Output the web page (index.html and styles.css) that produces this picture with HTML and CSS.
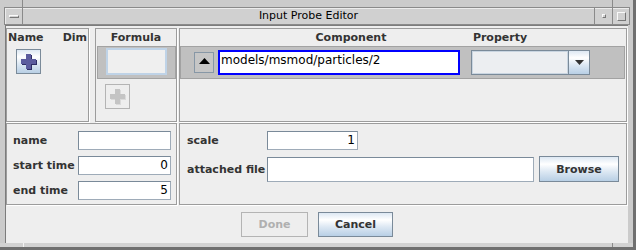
FILE: index.html
```html
<html>
	<head>
		<title>Input Probe Editor</title>
		<meta charset="UTF-8">
		<link rel="stylesheet" href="styles.css">
	</head>
	<body>
		<div class="window">
			<div class="frame-top">
				<div class="corner-l"></div>
				<div class="edge"></div>
				<div class="corner-r"></div>
			</div>
			<div class="titlebar">
				<div class="tb-menu"><span class="dash"></span></div>
				<div class="tb-title">Input Probe Editor</div>
				<div class="tb-min"><span class="dot"></span></div>
				<div class="tb-max"><span class="square"></span></div>
			</div>
			<div class="middle">
				<div class="client">
					<div class="top-row">
						<div class="pane names">
							<div class="pane-head names-head"><span>Name</span><span>Dim</span></div>
							<button class="icon-btn add-name">
								<svg width="16" height="16" viewBox="0 0 16 16">
									<path d="M6 1h5v5h5v5h-5v5h-5v-5h-5v-5h5z" fill="#2e2e66"/>
									<path d="M5 0h5v5h5v5h-5v5h-5v-5h-5v-5h5z" fill="#5c5c9e"/>
								</svg>
							</button>
						</div>
						<div class="pane formula">
							<div class="pane-head">Formula</div>
							<div class="sel-row formula-row"><div class="formula-field"></div></div>
							<button class="icon-btn add-formula" disabled>
								<svg width="16" height="16" viewBox="0 0 16 16">
									<path d="M6 1h5v5h5v5h-5v5h-5v-5h-5v-5h5z" fill="#dadada"/>
									<path d="M5 0h5v5h5v5h-5v5h-5v-5h-5v-5h5z" fill="#c4c4c4"/>
								</svg>
							</button>
						</div>
						<div class="pane component">
							<div class="pane-head comp-head"><span class="h-comp">Component</span><span class="h-prop">Property</span></div>
							<div class="sel-row comp-row">
								<button class="up-btn">
									<svg width="11" height="6" viewBox="0 0 11 6"><path d="M0 6L5.5 0L11 6z" fill="#000"/></svg>
								</button>
								<div class="path-field">models/msmod/particles/2</div>
								<div class="combo">
									<div class="combo-val"></div>
									<div class="combo-arrow">
										<svg width="9" height="5" viewBox="0 0 9 5"><path d="M0 0h9L4.5 5z" fill="#333"/></svg>
									</div>
								</div>
							</div>
						</div>
					</div>
					<div class="bottom-row">
						<div class="pane form times">
							<div class="form-line"><label>name</label><div class="field"></div></div>
							<div class="form-line"><label>start time</label><div class="field">0</div></div>
							<div class="form-line"><label>end time</label><div class="field">5</div></div>
						</div>
						<div class="pane form params">
							<div class="form-line"><label>scale</label><div class="field scale">1</div></div>
							<div class="form-line tall"><label>attached file</label><div class="field file"></div><button class="btn browse">Browse</button></div>
						</div>
					</div>
					<div class="actions">
						<button class="btn done" disabled>Done</button>
						<button class="btn cancel">Cancel</button>
					</div>
				</div>
			</div>
			<div class="frame-bottom">
				<div class="corner-l"></div>
				<div class="edge"></div>
				<div class="corner-r"></div>
			</div>
		</div>
	</body>
</html>
```

FILE: styles.css
```css
* {
	box-sizing: border-box;
	margin: 0px;
	padding: 0px;
}

body {
	font-family: "DejaVu Sans", sans-serif;
	background: #cbcbcb;
}

button { font-family: "DejaVu Sans", sans-serif; }

.window {
	width: 636px;
	height: 250px;
	background: #cbcbcb;
	border-right: 3px solid #6f6f6f;
	border-bottom: 3px solid #6f6f6f;
	display: flex;
	flex-direction: column;
}

/* window manager frame */

.frame-top, .frame-bottom { display: flex; }

.frame-top { height: 7px; }

.frame-bottom { height: 4px; background: #d2d2d2; }

.frame-top .corner-l { width: 23px; border-right: 1px solid #8a8a8a; }
.frame-bottom .corner-l { width: 24px; border-right: 1px solid #f4f4f4; }

.edge { flex: 1; }

.frame-top .corner-r { width: 21px; border-left: 1px solid #8a8a8a; }
.frame-bottom .corner-r { width: 21px; border-left: 1px solid #8a8a8a; }

.titlebar {
	display: flex;
	height: 18px;
	margin: 0px 3px 0px 4px;
	border: 1px solid #8a8a8a;
	background: #d0d0d0;
	box-shadow: inset 1px 1px 0 #ececec;
}

.tb-menu, .tb-min, .tb-max {
	display: flex;
	align-items: center;
	justify-content: center;
}

.tb-menu { width: 18px; border-right: 1px solid #8a8a8a; }

.tb-title {
	flex: 1;
	text-align: center;
	font-size: 11px;
	line-height: 16px;
	color: #000;
}

.tb-min { width: 18px; border-left: 1px solid #8a8a8a; }

.tb-max { width: 17px; border-left: 1px solid #8a8a8a; }

.dash {
	width: 10px;
	height: 3px;
	border-top: 1px solid #fafafa;
	border-left: 1px solid #fafafa;
	border-bottom: 1px solid #777;
	border-right: 1px solid #777;
}

.dot {
	width: 4px;
	height: 4px;
	border-top: 1px solid #fafafa;
	border-left: 1px solid #fafafa;
	border-bottom: 1px solid #777;
	border-right: 1px solid #777;
}

.square {
	width: 9px;
	height: 9px;
	border-top: 1px solid #fafafa;
	border-left: 1px solid #fafafa;
	border-bottom: 1px solid #777;
	border-right: 1px solid #777;
}

.middle {
	flex: 1;
	display: flex;
	padding: 0px 5px;
}

.client {
	flex: 1;
	display: flex;
	flex-direction: column;
	padding-top: 2px;
	background: #eeeeee;
	border-left: 1px solid #7c7c7c;
	border-top: 1px solid #7c7c7c;
}

/* panes */

.pane {
	border: 1px solid #9c9c9c;
	box-shadow: 1px 1px 0 #fff;
}

.pane-head {
	padding-top: 1px;
	line-height: 16px;
	font-size: 11px;
	font-weight: bold;
	color: #333;
	text-align: center;
}

.top-row {
	display: flex;
	height: 95px;
}

.top-row .pane { height: 94px; }

.names { width: 83px; margin-right: 6px; }

.names-head {
	display: flex;
	justify-content: space-between;
	padding-left: 1px;
	padding-right: 1px;
}

.formula { width: 82px; margin-right: 2px; }

.component { flex: 1; margin-right: 1px; }

.sel-row {
	height: 33px;
	background: #c0c0c0;
	border: 1px solid #a2a2a2;
}

.formula-row { margin-left: 1px; }

.formula-field {
	width: 61px;
	height: 27px;
	margin: 1px 0px 0px 8px;
	background: #efefef;
	border: 2px solid #bfd3e7;
}

.icon-btn {
	display: flex;
	align-items: center;
	justify-content: center;
	width: 25px;
	height: 25px;
	border: 1px solid #7a8a99;
	background: linear-gradient(#dde8f3 0%, #ffffff 30%, #dde8f3 60%, #b8cfe5 100%);
}

.icon-btn[disabled] {
	border-color: #b4b4b4;
	background: #eeeeee;
}

.add-name { margin: 3px 0px 0px 9px; }

.add-formula { margin: 5px 0px 0px 9px; }

.comp-head {
	display: flex;
	padding-left: 121px;
}

.h-comp { width: 100px; }

.h-prop { width: 80px; margin-left: 59px; }

.comp-row {
	display: flex;
	align-items: center;
	margin-right: 1px;
	padding-left: 13px;
}

.up-btn {
	display: flex;
	align-items: center;
	justify-content: center;
	width: 20px;
	height: 21px;
	padding-bottom: 3px;
	border: 1px solid #8797a6;
	background: #c6c6c6;
}

.path-field {
	width: 242px;
	height: 25px;
	margin-left: 4px;
	padding: 0px 0px 4px 1px;
	background: #fff;
	border: 2px solid #0000ff;
	font-size: 12px;
	line-height: 17px;
	color: #000;
	white-space: nowrap;
	overflow: hidden;
}

.combo {
	display: flex;
	width: 119px;
	height: 25px;
	margin-left: 11px;
	border: 1px solid #7a8a99;
}

.combo-val {
	flex: 1;
	background: #eceef1;
	box-shadow: inset 0 0 0 1px #c9d5e1;
}

.combo-arrow {
	display: flex;
	align-items: center;
	justify-content: center;
	width: 21px;
	border-left: 1px solid #7a8a99;
	background: linear-gradient(#dde8f3 0%, #ffffff 30%, #dde8f3 60%, #b8cfe5 100%);
}

/* fields */

.bottom-row {
	display: flex;
	height: 83px;
}

.bottom-row .pane { height: 82px; }

.form {
	display: flex;
	flex-direction: column;
	gap: 6px;
	padding-top: 7px;
}

.times { width: 171px; margin-right: 2px; padding-left: 6px; }

.params { flex: 1; margin-right: 1px; padding-left: 7px; }

.form-line {
	display: flex;
	align-items: center;
	height: 19px;
}

.form-line.tall { height: 26px; }

label {
	font-size: 11px;
	font-weight: bold;
	color: #333;
	white-space: nowrap;
}

.times label { width: 65px; }

.params label { width: 80px; }

.field {
	width: 93px;
	height: 19px;
	padding-right: 2px;
	background: #fff;
	border: 1px solid;
	border-color: #7a8a99 #9eabb8 #9eabb8 #7a8a99;
	font-size: 12px;
	line-height: 17px;
	text-align: right;
	color: #000;
}

.field.scale { width: 91px; }

.field.file { width: 267px; height: 25px; }

.btn {
	height: 25px;
	border: 1px solid #7a8a99;
	background: linear-gradient(#dde8f3 0%, #ffffff 30%, #dde8f3 60%, #b8cfe5 100%);
	font-size: 11px;
	font-weight: bold;
	color: #333;
}

.btn[disabled] {
	border-color: #b4b4b4;
	background: #eeeeee;
	color: #b0b0b0;
}

.browse { width: 80px; height: 26px; margin-left: 5px; }

.actions {
	flex: 1;
	display: flex;
	justify-content: center;
	gap: 10px;
	padding-top: 6px;
}

.done { width: 67px; }

.cancel { width: 75px; }
```
